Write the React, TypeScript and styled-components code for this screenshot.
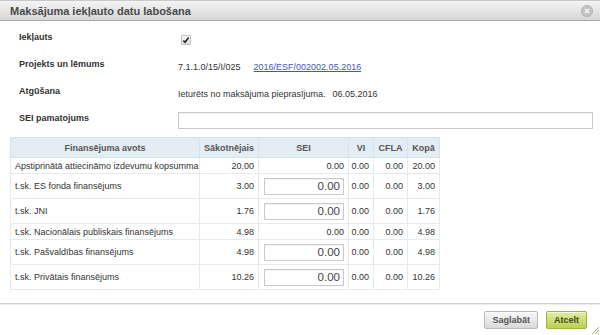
import React from "react";
import styled, { createGlobalStyle } from "styled-components";

const GlobalStyle = createGlobalStyle`
  html, body {
    margin: 0;
    padding: 0;
    background: #fff;
  }
  body {
    font-family: "Liberation Sans", Arial, sans-serif;
    font-size: 9px;
    color: #333;
  }
`;

type Row = {
  name: string;
  start: string;
  sei: string;
  editable: boolean;
  total: string;
};

const rows: Row[] = [
  { name: "Apstiprinātā attiecināmo izdevumu kopsumma", start: "20.00", sei: "0.00", editable: false, total: "20.00" },
  { name: "t.sk. ES fonda finansējums", start: "3.00", sei: "0.00", editable: true, total: "3.00" },
  { name: "t.sk. JNI", start: "1.76", sei: "0.00", editable: true, total: "1.76" },
  { name: "t.sk. Nacionālais publiskais finansējums", start: "4.98", sei: "0.00", editable: false, total: "4.98" },
  { name: "t.sk. Pašvaldības finansējums", start: "4.98", sei: "0.00", editable: true, total: "4.98" },
  { name: "t.sk. Privātais finansējums", start: "10.26", sei: "0.00", editable: true, total: "10.26" },
];

export default function App() {
  return (
    <>
      <GlobalStyle />
      <Dialog>
        <TitleBar>
          <Title>Maksājuma iekļauto datu labošana</Title>
          <CloseIcon width="12" height="12" viewBox="0 0 12 12">
            <circle cx="6" cy="6" r="5.5" fill="#c4c4c4" stroke="#b0b0b0" />
            <path d="M4 4 L8 8 M8 4 L4 8" stroke="#f4f4f4" strokeWidth="1.6" />
          </CloseIcon>
        </TitleBar>

        <Body>
          <Form>
            <FormRow>
              <Label>Iekļauts</Label>
              <Value>
                <CheckBox>
                  <svg width="8" height="8" viewBox="0 0 9 9">
                    <path d="M1.5 5 L3.5 7 L7.5 1.8" stroke="#222" strokeWidth="1.8" fill="none" />
                  </svg>
                </CheckBox>
              </Value>
            </FormRow>
            <FormRow>
              <Label>Projekts un lēmums</Label>
              <Value>
                7.1.1.0/15/I/025
                <Link href="#">2016/ESF/002002.05.2016</Link>
              </Value>
            </FormRow>
            <FormRow>
              <Label>Atgūšana</Label>
              <Value>
                Ieturēts no maksājuma pieprasījuma.
                <DateText>06.05.2016</DateText>
              </Value>
            </FormRow>
            <FormRow>
              <Label>SEI pamatojums</Label>
              <Value>
                <TextInput />
              </Value>
            </FormRow>
          </Form>

          <Table>
            <colgroup>
              <col style={{ width: 189 }} />
              <col style={{ width: 59 }} />
              <col style={{ width: 90 }} />
              <col style={{ width: 25 }} />
              <col style={{ width: 34 }} />
              <col style={{ width: 32 }} />
            </colgroup>
            <thead>
              <tr>
                <Th>Finansējuma avots</Th>
                <Th>Sākotnējais</Th>
                <Th>SEI</Th>
                <Th>VI</Th>
                <Th>CFLA</Th>
                <Th>Kopā</Th>
              </tr>
            </thead>
            <tbody>
              {rows.map((r) => (
                <BodyRow key={r.name} $tall={r.editable}>
                  <Td>{r.name}</Td>
                  <NumTd>{r.start}</NumTd>
                  <NumTd>{r.editable ? <AmountInput defaultValue={r.sei} /> : r.sei}</NumTd>
                  <NumTd>0.00</NumTd>
                  <NumTd>0.00</NumTd>
                  <NumTd>{r.total}</NumTd>
                </BodyRow>
              ))}
            </tbody>
          </Table>
        </Body>

        <Footer>
          <Button>Saglabāt</Button>
          <Button $primary>Atcelt</Button>
          <Grip width="8" height="8" viewBox="0 0 8 8">
            <path d="M8 1 L1 8 M8 4 L4 8 M8 7 L7 8" stroke="#a8c060" strokeWidth="1" />
          </Grip>
        </Footer>
      </Dialog>
    </>
  );
}

const Dialog = styled.div`
  width: 600px;
  height: 335px;
  display: flex;
  flex-direction: column;
  position: relative;
  overflow: hidden;
  background: #fff;
`;

const TitleBar = styled.div`
  height: 21px;
  flex: none;
  box-sizing: border-box;
  display: flex;
  align-items: center;
  justify-content: space-between;
  padding: 0 7px 0 10px;
  background: linear-gradient(#f4f4f4, #d6d6d6);
  border-top: 1px solid #c8c8c8;
  border-bottom: 1px solid #a8a8a8;
`;

const Title = styled.h1`
  margin: 0;
  font-size: 11px;
  font-weight: bold;
  color: #4a4a4a;
`;

const CloseIcon = styled.svg`
  display: block;
`;

const Body = styled.div`
  flex: 1;
  padding: 5px 10px 0 10px;
`;

const Form = styled.div`
  display: flex;
  flex-direction: column;
  padding-left: 9px;
  margin-bottom: 3px;
`;

const FormRow = styled.div`
  display: grid;
  grid-template-columns: 159px 1fr;
  align-items: center;
  height: 27px;
`;

const Label = styled.div`
  font-weight: bold;
  color: #333;
  padding-bottom: 6px;
`;

const Value = styled.div`
  display: flex;
  align-items: center;
  color: #333;
`;

const CheckBox = styled.span`
  width: 8px;
  height: 8px;
  margin-left: 3px;
  border: 1px solid #c0c0c0;
  border-radius: 1px;
  background: linear-gradient(#fafafa, #dedede);
  display: flex;
  align-items: center;
  justify-content: center;
`;

const Link = styled.a`
  margin-left: 13px;
  color: #3f56c8;
  text-decoration: underline;
`;

const DateText = styled.span`
  margin-left: 7px;
`;

const TextInput = styled.input`
  width: 415px;
  height: 17px;
  box-sizing: border-box;
  border: 1px solid #c9c9c9;
  box-shadow: inset 0 1px 1px rgba(0, 0, 0, 0.06);
  padding: 0 3px;
  font: inherit;
`;

const Table = styled.table`
  width: 429px;
  table-layout: fixed;
  border-collapse: collapse;
  border: 1px solid #d2e5ec;
`;

const Th = styled.th`
  height: 19px;
  padding: 0 2px;
  background: #e5edf4;
  border: 1px solid #d2e5ec;
  font-weight: bold;
  color: #555;
  text-align: center;
  white-space: nowrap;
`;

const BodyRow = styled.tr<{ $tall: boolean }>`
  height: ${(p) => (p.$tall ? "25px" : "16px")};
`;

const Td = styled.td`
  padding: 0 4px;
  border: 1px solid #e3ebf1;
  color: #333;
  white-space: nowrap;
  overflow: hidden;
`;

const NumTd = styled(Td)`
  text-align: right;
  padding: 0 4px 0 2px;
`;

const AmountInput = styled.input`
  width: 80px;
  height: 17px;
  box-sizing: border-box;
  display: block;
  margin-left: auto;
  border: 1px solid #c9c9c9;
  box-shadow: inset 0 1px 1px rgba(0, 0, 0, 0.05);
  padding: 0 3px;
  text-align: right;
  font-family: "Liberation Sans", Arial, sans-serif;
  font-size: 11.5px;
  color: #444;
`;

const Footer = styled.div`
  height: 31px;
  flex: none;
  border-top: 1px solid #d0d0d0;
  box-shadow: inset 0 1px 0 #eee;
  display: flex;
  align-items: center;
  justify-content: flex-end;
  gap: 8px;
  padding: 0 13px 0 0;
  position: relative;
`;

const Button = styled.button<{ $primary?: boolean }>`
  height: 18px;
  padding: 0 7px;
  font-family: "Liberation Sans", Arial, sans-serif;
  font-size: 9px;
  font-weight: bold;
  border-radius: 2px;
  border: 1px solid ${(p) => (p.$primary ? "#9db33a" : "#b9b9b9")};
  background: ${(p) =>
    p.$primary
      ? "linear-gradient(#e2eba6, #bccf55)"
      : "linear-gradient(#f8f8f8, #d9d9d9)"};
  color: ${(p) => (p.$primary ? "#3c4a12" : "#555")};
  box-shadow: inset 0 1px 0 rgba(255, 255, 255, 0.6);
`;

const Grip = styled.svg`
  position: absolute;
  right: 1px;
  bottom: 1px;
`;
